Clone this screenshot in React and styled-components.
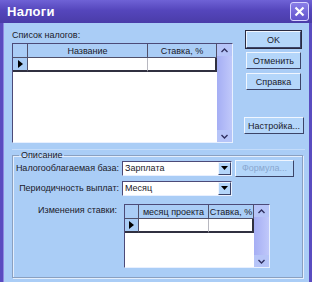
import React from "react";
import styled, { createGlobalStyle } from "styled-components";

const GlobalStyle = createGlobalStyle`
  html, body {
    margin: 0;
    padding: 0;
    background: #aacdf6;
  }
  body {
    font-family: "Liberation Sans", Arial, sans-serif;
    font-size: 9px;
    color: #1a1a2a;
    white-space: nowrap;
  }
`;

const Window = styled.div`
  width: 312px;
  height: 282px;
  display: flex;
  flex-direction: column;
  background: #5a4cc0;
  overflow: hidden;
`;

const TitleBar = styled.div`
  height: 23px;
  flex: none;
  display: flex;
  align-items: center;
  justify-content: space-between;
  padding: 0 3px 0 7px;
  background: linear-gradient(180deg, #6f62d6 0%, #5546bc 45%, #4a3ca8 100%);
`;

const Title = styled.span`
  color: #fff;
  font-weight: bold;
  font-size: 13px;
  letter-spacing: 0.3px;
`;

const CloseButton = styled.div`
  width: 19px;
  height: 19px;
  box-sizing: border-box;
  border: 1px solid #d8d4ff;
  border-radius: 3px;
  background: linear-gradient(180deg, #8a7ee8, #6254cc);
  display: flex;
  align-items: center;
  justify-content: center;
`;

const Body = styled.div`
  flex: 1;
  margin: 0 3px 0 3px;
  border-left: 1px solid #8f86e0;
  background: #aacdf6;
  display: flex;
  flex-direction: column;
  padding: 6px 0 0 8px;
  min-height: 0;
`;

const Upper = styled.div`
  display: flex;
  gap: 13px;
  padding-bottom: 6px;
  border-bottom: 1px solid #c4dcfa;
  margin-right: 4px;
`;

const Label = styled.div`
  height: 12px;
  line-height: 12px;
  margin-bottom: 2px;
`;

const GridFrame = styled.div`
  display: flex;
  width: ${(p) => p.$width}px;
  height: ${(p) => p.$height}px;
  box-sizing: border-box;
  border: 1px solid #4c4a78;
  border-right-color: #e8f0ff;
  border-bottom-color: #e8f0ff;
  background: #fff;
`;

const GridMain = styled.div`
  flex: 1;
  display: flex;
  flex-direction: column;
  min-width: 0;
`;

const Row = styled.div`
  display: grid;
  grid-template-columns: ${(p) => p.$cols};
  height: 14px;
  box-sizing: border-box;
`;

const HeaderCell = styled.div`
  background: #aacdf6;
  border-right: 1px solid #50506a;
  border-bottom: 1px solid #50506a;
  display: flex;
  align-items: center;
  justify-content: center;
  overflow: hidden;
`;

const IndicatorCell = styled.div`
  background: #aacdf6;
  border-right: 1px solid #50506a;
  border-bottom: 2px solid #303040;
  display: flex;
  align-items: center;
  justify-content: center;
`;

const DataCell = styled.div`
  background: #fff;
  border-right: 1px solid #b8b8c0;
  border-bottom: 2px solid #303040;
  &:last-child {
    border-right: 2px solid #303040;
  }
`;

const Scroll = styled.div`
  width: 15px;
  flex: none;
  display: flex;
  flex-direction: column;
  justify-content: space-between;
  background: linear-gradient(90deg, #a5aef4, #c0c8fa);
`;

const ScrollArrow = styled.div`
  height: 12px;
  display: flex;
  align-items: center;
  justify-content: center;
  background: #b6c4f8;
`;

const ButtonColumn = styled.div`
  display: flex;
  flex-direction: column;
  padding-top: 2px;
  gap: 4px;
`;

const Button = styled.div`
  width: ${(p) => p.$w || 55}px;
  height: 17px;
  box-sizing: border-box;
  display: flex;
  align-items: center;
  justify-content: center;
  background: #b4d6fa;
  color: ${(p) => (p.$disabled ? "#8aa8d0" : "#1a1a2a")};
  border: 1px solid;
  border-color: #f0f6ff #3c4468 #3c4468 #f0f6ff;
  outline: ${(p) => (p.$default ? "1px solid #2a2a40" : "none")};
  margin-top: ${(p) => p.$mt || 0}px;
  margin-left: ${(p) => p.$ml || 0}px;
`;

const Group = styled.fieldset`
  margin: 0 6px 4px 0;
  padding: 0;
  border: 1px solid #8aa0c0;
  box-shadow: 1px 1px 0 #e4eefc, inset 1px 1px 0 #e4eefc;
  flex: 1;
  min-height: 0;
`;

const Legend = styled.legend`
  padding: 0 2px;
  margin-left: 6px;
`;

const FieldRow = styled.div`
  display: flex;
  align-items: center;
  height: 16px;
  margin-bottom: 4px;
`;

const FieldLabel = styled.div`
  width: 106px;
  text-align: right;
  padding-right: 3px;
`;

const Combo = styled.div`
  width: 110px;
  height: 15px;
  box-sizing: border-box;
  display: flex;
  align-items: center;
  background: #fff;
  border: 1px solid;
  border-color: #4c4a78 #e8f0ff #e8f0ff #4c4a78;
  padding-left: 2px;
`;

const ComboText = styled.span`
  flex: 1;
`;

const ComboButton = styled.div`
  width: 13px;
  height: 13px;
  box-sizing: border-box;
  background: #b4d6fa;
  border: 1px solid;
  border-color: #f0f6ff #3c4468 #3c4468 #f0f6ff;
  display: flex;
  align-items: center;
  justify-content: center;
`;

const RateRow = styled.div`
  display: flex;
  margin-top: 8px;
`;

const RateLabel = styled.div`
  width: 104px;
  text-align: right;
  padding-right: 7px;
  padding-top: 1px;
`;

const Arrow = ({ up }) => (
  <svg width="7" height="5" viewBox="0 0 7 5">
    <path
      d={up ? "M0.5 4 L3.5 1 L6.5 4" : "M0.5 1 L3.5 4 L6.5 1"}
      fill="none"
      stroke="#303060"
      strokeWidth="1.4"
    />
  </svg>
);

const RowPointer = () => (
  <svg width="5" height="8" viewBox="0 0 5 8">
    <path d="M0 0 L5 4 L0 8 Z" fill="#000" />
  </svg>
);

const DropTriangle = () => (
  <svg width="7" height="4" viewBox="0 0 7 4">
    <path d="M0 0 H7 L3.5 4 Z" fill="#000" />
  </svg>
);

const Grid = ({ width, height, cols, headers }) => (
  <GridFrame $width={width} $height={height}>
    <GridMain>
      <Row $cols={cols}>
        <HeaderCell />
        {headers.map((h) => (
          <HeaderCell key={h}>{h}</HeaderCell>
        ))}
      </Row>
      <Row $cols={cols}>
        <IndicatorCell>
          <RowPointer />
        </IndicatorCell>
        {headers.map((h) => (
          <DataCell key={h} />
        ))}
      </Row>
    </GridMain>
    <Scroll>
      <ScrollArrow>
        <Arrow up />
      </ScrollArrow>
      <ScrollArrow>
        <Arrow />
      </ScrollArrow>
    </Scroll>
  </GridFrame>
);

export default function App() {
  return (
    <>
      <GlobalStyle />
      <Window>
        <TitleBar>
          <Title>Налоги</Title>
          <CloseButton>
            <svg width="11" height="11" viewBox="0 0 11 11">
              <path d="M1.5 1.5 L9.5 9.5 M9.5 1.5 L1.5 9.5" stroke="#fff" strokeWidth="2.2" />
            </svg>
          </CloseButton>
        </TitleBar>
        <Body>
          <Upper>
            <div>
              <Label>Список налогов:</Label>
              <Grid
                width={221}
                height={100}
                cols="15px 120px 1fr"
                headers={["Название", "Ставка, %"]}
              />
            </div>
            <ButtonColumn>
              <Button $default>OK</Button>
              <Button>Отменить</Button>
              <Button>Справка</Button>
              <Button $w={60} $mt={23} $ml={-2}>
                Настройка...
              </Button>
            </ButtonColumn>
          </Upper>
          <Group>
            <Legend>Описание</Legend>
            <FieldRow>
              <FieldLabel>Налогооблагаемая база:</FieldLabel>
              <Combo>
                <ComboText>Зарплата</ComboText>
                <ComboButton>
                  <DropTriangle />
                </ComboButton>
              </Combo>
              <Button $w={59} $ml={3} $disabled>
                Формула...
              </Button>
            </FieldRow>
            <FieldRow>
              <FieldLabel>Периодичность выплат:</FieldLabel>
              <Combo>
                <ComboText>Месяц</ComboText>
                <ComboButton>
                  <DropTriangle />
                </ComboButton>
              </Combo>
            </FieldRow>
            <RateRow>
              <RateLabel>Изменения ставки:</RateLabel>
              <Grid
                width={146}
                height={64}
                cols="14px 70px 1fr"
                headers={["месяц проекта", "Ставка, %"]}
              />
            </RateRow>
          </Group>
        </Body>
      </Window>
    </>
  );
}
